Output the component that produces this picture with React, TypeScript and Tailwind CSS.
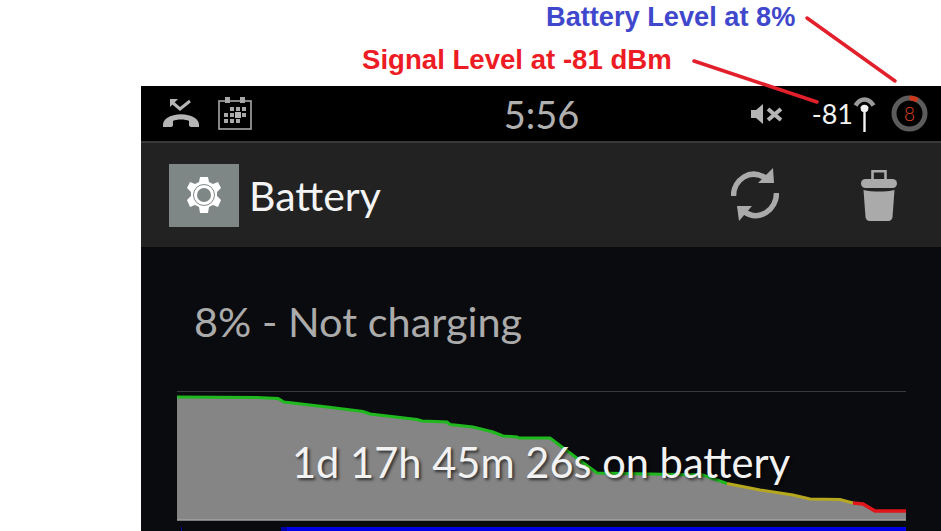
const lato = 'font-["Lato","Noto_Sans",sans-serif]'

const greenLine =
  '177,397 257,397.5 278,398.5 284,402 327,407 363,411.5 370,414 417,419.5 422,421 447,422 450,424.5 473,427 493,432 503,436 517,437 519,438 550,438 570,453 597,473 703,475 727,483.5'
const yellowLine = '727,483.5 760,490 793,495 810,499 840,499.5 853,503'
const redLine = '853,503 863,504 875,511 906,511'

function MissedCallIcon() {
  return (
    <svg width="36" height="30" viewBox="0 0 36 30" fill="none">
      <path d="M27 2l-10 8-7-6" stroke="#b5b5b5" strokeWidth="3" />
      <path d="M7 0h8l-8 8z" fill="#b5b5b5" />
      <path
        d="M0 28c-.5-4 1-7 4-9 8-5 20-5 28 0 3 2 4.500 5 4 9h-8c-1 0-2-1-2-2v-4c-3-2-13-2-16 0v4c0 1-1 2-2 2z"
        fill="#b5b5b5"
      />
    </svg>
  )
}

function CalendarIcon() {
  const cells = [
    [12, 10], [18, 10], [24, 10],
    [6, 16], [12, 16], [24, 16],
    [6, 22], [12, 22], [18, 22],
  ]
  return (
    <svg width="34" height="33" viewBox="0 0 34 33" fill="none">
      <rect x="1" y="4" width="32" height="28" stroke="#a8a8a8" strokeWidth="1.6" />
      <rect x="7" y="0" width="5" height="6" fill="#a8a8a8" />
      <rect x="22" y="0" width="5" height="6" fill="#a8a8a8" />
      {cells.map(([x, y]) => (
        <rect key={`${x}-${y}`} x={x} y={y} width="4" height="4" fill="#a8a8a8" />
      ))}
      <rect x="17" y="15" width="6" height="6" fill="#b8b8b8" />
    </svg>
  )
}

function MuteIcon() {
  return (
    <svg width="32" height="20" viewBox="0 0 32 20" fill="none">
      <path d="M0 6h5l7-6v20l-7-6H0z" fill="#b5b5b5" />
      <path d="M17 5l13 11M30 5L17 16" stroke="#b5b5b5" strokeWidth="4" />
    </svg>
  )
}

function SignalIcon() {
  return (
    <svg width="23" height="36" viewBox="0 0 23 36" fill="none">
      <path d="M2.500 9.500C7.500 1.500 15.500 1.500 20.500 9.500" stroke="#9a9a9a" strokeWidth="4.500" />
      <path d="M7 11.500C9.500 8.500 13.500 8.500 16 11.500L11.500 15z" fill="#8a8a8a" />
      <circle cx="11.500" cy="12.500" r="3.800" fill="#f2f2f2" />
      <rect x="10.300" y="14" width="2.400" height="22" fill="#f2f2f2" />
    </svg>
  )
}

function BatteryRing() {
  return (
    <div className="relative flex h-[37px] w-[37px] items-center justify-center">
      <svg width="37" height="37" viewBox="0 0 37 37" fill="none" className="absolute inset-0">
        <circle cx="18.500" cy="18.500" r="15.500" stroke="#5c5c5c" strokeWidth="5" />
        <path d="M18.500 3A15.500 15.500 0 0 1 26.500 5.200" stroke="#c9391c" strokeWidth="5" />
      </svg>
      <span className={`${lato} text-[19px] font-light leading-none text-[#e0441f]`}>8</span>
    </div>
  )
}

function GearIcon() {
  return (
    <svg width="34" height="36" viewBox="0 0 34 36" fill="none">
      <path
        d="M13 0h8l1 5 4 2 5-2 3 6-4 4v4l4 4-3 7-5-2-4 2-1 6h-8l-1-6-4-2-5 2-3-7 4-4v-4L0 11l3-6 5 2 4-2z"
        fill="#fff"
      />
      <circle cx="17" cy="18" r="10.500" stroke="#7f8786" strokeWidth="1" />
      <circle cx="17" cy="18" r="7" fill="#7f8786" />
    </svg>
  )
}

function RefreshIcon() {
  return (
    <svg width="48" height="54" viewBox="0 0 48 54" fill="none">
      <path d="M2.500 28C2.500 12 19 -1 36 11" stroke="#aaa" strokeWidth="5.500" />
      <path d="M42 0l1 15H27z" fill="#aaa" />
      <path d="M45.500 25C45.500 41 29 55 12 43" stroke="#aaa" strokeWidth="5.500" />
      <path d="M6 38h15L8 53z" fill="#aaa" />
    </svg>
  )
}

function TrashIcon() {
  return (
    <svg width="36" height="51" viewBox="0 0 36 51" fill="none">
      <path d="M11.500 9V1.300h13V9" stroke="#aaa" strokeWidth="2.600" />
      <rect x="0" y="9" width="36" height="9" rx="4.500" fill="#aaa" />
      <path d="M2.500 20C12 22 24 22 33.500 20l-2 27c0 2-2 4-4 4H8.500c-2 0-4-2-4-4z" fill="#aaa" />
    </svg>
  )
}

function StatusBar() {
  return (
    <div className="flex h-[55px] shrink-0 items-center bg-black">
      <div className="flex flex-1 items-center gap-[19px] pl-[22px]">
        <MissedCallIcon />
        <CalendarIcon />
      </div>
      <div className={`${lato} mr-[8px] text-[38px] leading-none text-[#b0b0b0]`}>5:56</div>
      <div className="flex flex-1 items-center justify-end pr-[13px]">
        <MuteIcon />
        <span className={`${lato} ml-[29px] text-[27px] leading-none text-[#f2f2f2]`}>-81</span>
        <SignalIcon />
        <div className="ml-[15px]">
          <BatteryRing />
        </div>
      </div>
    </div>
  )
}

function ActionBar() {
  return (
    <div className="flex h-[106px] shrink-0 items-center border-t-[2px] border-[#3a3a3a] bg-[#222222] pl-[28px] pr-[44px]">
      <div className="flex h-[63px] w-[70px] items-center justify-center bg-[#7f8786]">
        <GearIcon />
      </div>
      <div className={`${lato} ml-[10px] flex-1 text-[41px] leading-none text-[#f4f4f4]`}>Battery</div>
      <RefreshIcon />
      <div className="ml-[82px]">
        <TrashIcon />
      </div>
    </div>
  )
}

function BatteryChart() {
  return (
    <div className="relative ml-[36px] mr-[35px] h-[130px]">
      <svg width="729" height="130" viewBox="177 391 729 130" fill="none" className="block">
        <line x1="177" y1="391" x2="906" y2="391" stroke="#3a3b3e" strokeWidth="2" />
        <polygon points={`${greenLine} ${yellowLine} ${redLine} 906,520 177,520`} fill="#858585" />
        <line x1="177" y1="520" x2="906" y2="520" stroke="#a2a2a2" strokeWidth="1.500" />
        <polyline points={greenLine} stroke="#1fb81f" strokeWidth="3" />
        <polyline points={yellowLine} stroke="#b5a81e" strokeWidth="3" />
        <polyline points={redLine} stroke="#e0161c" strokeWidth="3.500" />
      </svg>
      <div
        className={`${lato} absolute left-[115px] top-[51px] whitespace-nowrap text-[41.600px] leading-none text-[#f2f2f2] [text-shadow:2px_2px_3px_rgba(0,0,0,0.65)]`}
      >
        1d 17h 45m 26s on battery
      </div>
    </div>
  )
}

function BatteryPanel() {
  return (
    <div className="flex flex-1 flex-col bg-[#0a0b0e]">
      <div className={`${lato} ml-[53px] mt-[49px] h-[95px] text-[41.500px] leading-[50px] text-[#ababab]`}>
        8% - Not charging
      </div>
      <BatteryChart />
      <div className="ml-[40px] mr-[35px] mt-[6px] flex h-[4px] items-stretch">
        <div className="w-[1px] bg-[#0000a8]" />
        <div className="ml-[99px] w-[6px] bg-[#0000a8]" />
        <div className="flex-1 bg-[#0000e6]" />
      </div>
    </div>
  )
}

export default function App() {
  return (
    <div className="relative flex h-[531px] w-[941px] flex-col overflow-hidden bg-white">
      <div className="h-[86px] shrink-0" />
      <div className="ml-[141px] flex flex-1 flex-col overflow-hidden">
        <StatusBar />
        <ActionBar />
        <BatteryPanel />
      </div>

      {/* callouts over the screenshot */}
      <div className="absolute left-[546px] top-[2px] whitespace-nowrap font-['Liberation_Sans',sans-serif] text-[27.200px] font-bold leading-[30px] text-[#3f48cc]">
        Battery Level at 8%
      </div>
      <div className="absolute left-[362px] top-[45px] whitespace-nowrap font-['Liberation_Sans',sans-serif] text-[27.600px] font-bold leading-[30px] text-[#ed1c24]">
        Signal Level at -81 dBm
      </div>
      <svg width="941" height="120" viewBox="0 0 941 120" fill="none" className="pointer-events-none absolute left-0 top-0">
        <line x1="807" y1="18" x2="895" y2="81" stroke="#e2202c" strokeWidth="3.500" strokeLinecap="round" />
        <line x1="694" y1="61" x2="817" y2="102" stroke="#e2202c" strokeWidth="3.500" strokeLinecap="round" />
      </svg>
    </div>
  )
}
